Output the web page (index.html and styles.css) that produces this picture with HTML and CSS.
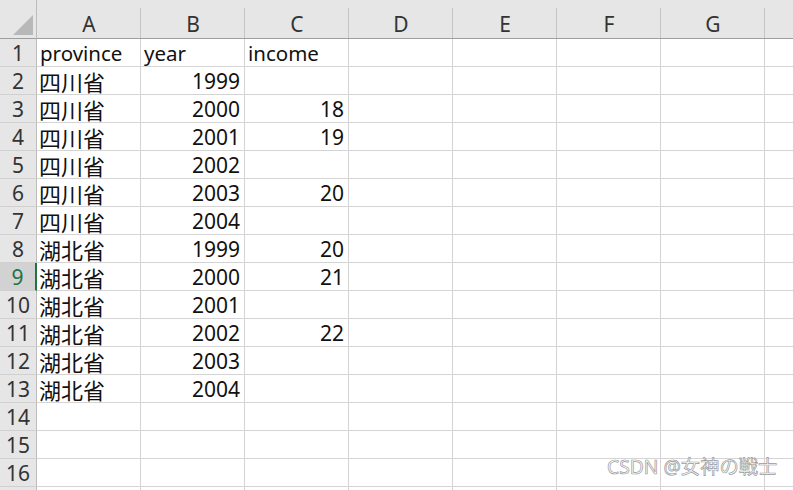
FILE: index.html
```html
<!DOCTYPE html>
<html lang="zh">
<head>
<meta charset="utf-8">
<link rel="stylesheet" href="styles.css">
</head>
<body>
<div class="sheet">
  <div class="row head">
    <div class="rh corner"><span class="tri"></span></div>
    <div class="ch">A</div><div class="ch">B</div><div class="ch">C</div><div class="ch">D</div><div class="ch">E</div><div class="ch">F</div><div class="ch">G</div><div class="ch">&nbsp;</div>
  </div>
  <div class="row"><div class="rh">1</div><div class="c">province</div><div class="c">year</div><div class="c">income</div><div class="c"></div><div class="c"></div><div class="c"></div><div class="c"></div><div class="c"></div></div>
  <div class="row"><div class="rh">2</div><div class="c z">四川省</div><div class="c n">1999</div><div class="c n"></div><div class="c"></div><div class="c"></div><div class="c"></div><div class="c"></div><div class="c"></div></div>
  <div class="row"><div class="rh">3</div><div class="c z">四川省</div><div class="c n">2000</div><div class="c n">18</div><div class="c"></div><div class="c"></div><div class="c"></div><div class="c"></div><div class="c"></div></div>
  <div class="row"><div class="rh">4</div><div class="c z">四川省</div><div class="c n">2001</div><div class="c n">19</div><div class="c"></div><div class="c"></div><div class="c"></div><div class="c"></div><div class="c"></div></div>
  <div class="row"><div class="rh">5</div><div class="c z">四川省</div><div class="c n">2002</div><div class="c n"></div><div class="c"></div><div class="c"></div><div class="c"></div><div class="c"></div><div class="c"></div></div>
  <div class="row"><div class="rh">6</div><div class="c z">四川省</div><div class="c n">2003</div><div class="c n">20</div><div class="c"></div><div class="c"></div><div class="c"></div><div class="c"></div><div class="c"></div></div>
  <div class="row"><div class="rh">7</div><div class="c z">四川省</div><div class="c n">2004</div><div class="c n"></div><div class="c"></div><div class="c"></div><div class="c"></div><div class="c"></div><div class="c"></div></div>
  <div class="row"><div class="rh">8</div><div class="c z">湖北省</div><div class="c n">1999</div><div class="c n">20</div><div class="c"></div><div class="c"></div><div class="c"></div><div class="c"></div><div class="c"></div></div>
  <div class="row"><div class="rh sel">9</div><div class="c z">湖北省</div><div class="c n">2000</div><div class="c n">21</div><div class="c"></div><div class="c"></div><div class="c"></div><div class="c"></div><div class="c"></div></div>
  <div class="row"><div class="rh">10</div><div class="c z">湖北省</div><div class="c n">2001</div><div class="c n"></div><div class="c"></div><div class="c"></div><div class="c"></div><div class="c"></div><div class="c"></div></div>
  <div class="row"><div class="rh">11</div><div class="c z">湖北省</div><div class="c n">2002</div><div class="c n">22</div><div class="c"></div><div class="c"></div><div class="c"></div><div class="c"></div><div class="c"></div></div>
  <div class="row"><div class="rh">12</div><div class="c z">湖北省</div><div class="c n">2003</div><div class="c n"></div><div class="c"></div><div class="c"></div><div class="c"></div><div class="c"></div><div class="c"></div></div>
  <div class="row"><div class="rh">13</div><div class="c z">湖北省</div><div class="c n">2004</div><div class="c n"></div><div class="c"></div><div class="c"></div><div class="c"></div><div class="c"></div><div class="c"></div></div>
  <div class="row"><div class="rh">14</div><div class="c"></div><div class="c"></div><div class="c"></div><div class="c"></div><div class="c"></div><div class="c"></div><div class="c"></div><div class="c"></div></div>
  <div class="row"><div class="rh">15</div><div class="c"></div><div class="c"></div><div class="c"></div><div class="c"></div><div class="c"></div><div class="c"></div><div class="c"></div><div class="c"></div></div>
  <div class="row"><div class="rh">16</div><div class="c"></div><div class="c"></div><div class="c"></div><div class="c"></div><div class="c"></div><div class="c"></div><div class="c"></div><div class="c"></div></div>
  <div class="row"><div class="rh"></div><div class="c"></div><div class="c"></div><div class="c"></div><div class="c"></div><div class="c"></div><div class="c"></div><div class="c"></div><div class="c"></div></div>
</div>
<div class="watermark">CSDN @女神の戦士</div>
</body>
</html>
```
FILE: styles.css
```css
html, body {
  margin: 0;
  padding: 0;
  background: #fff;
  overflow: hidden;
  width: 793px;
  height: 490px;
}
body {
  position: relative;
  font-family: "Noto Sans", "Noto Sans CJK SC", sans-serif;
  font-size: 21px;
  color: #111;
}
.sheet {
  display: flex;
  flex-direction: column;
  width: 793px;
  height: 490px;
  overflow: hidden;
}
.row {
  display: flex;
  height: 28px;
  flex: none;
}
.row.head {
  height: 39px;
}
.rh {
  box-sizing: border-box;
  width: 37px;
  flex: none;
  background: #e6e6e6;
  border-right: 1px solid #bcbcbc;
  border-bottom: 1px solid #d0d0d0;
  display: flex;
  align-items: center;
  justify-content: center;
  color: #333;
  line-height: 1;
  padding-top: 2px;
}
.rh.sel {
  background: #d2d2d2;
  color: #217346;
  border-right: 2px solid #217346;
}
.corner {
  position: relative;
  border-bottom: 1px solid #9e9e9e;
}
.tri {
  position: absolute;
  left: 13px;
  top: 15px;
  width: 20px;
  height: 20px;
  background: #b8b8b8;
  clip-path: polygon(100% 0, 100% 100%, 0 100%);
}
.ch {
  box-sizing: border-box;
  width: 104px;
  flex: none;
  background: #e6e6e6;
  border-bottom: 1px solid #9e9e9e;
  position: relative;
  display: flex;
  align-items: flex-end;
  justify-content: center;
  padding-bottom: 3px;
  color: #333;
  line-height: 1;
}
.ch::after {
  content: "";
  position: absolute;
  right: 0;
  top: 8px;
  bottom: 0;
  width: 1px;
  background: #c4c4c4;
}
.c {
  box-sizing: border-box;
  width: 104px;
  flex: none;
  border-right: 1px solid #d4d4d4;
  border-bottom: 1px solid #d4d4d4;
  display: flex;
  align-items: center;
  padding: 2px 4px 0 3px;
  line-height: 1;
  white-space: nowrap;
  font-size: 20.5px;
}
.c.n {
  justify-content: flex-end;
  font-size: 21px;
}
.c.z {
  font-size: 22px;
  padding-left: 2px;
}
.watermark {
  position: absolute;
  left: 607px;
  top: 457px;
  font-size: 19.3px;
  line-height: 1;
  color: #fff;
  -webkit-text-stroke: 0.7px #9a9a9a;
  font-family: "Noto Sans", "Noto Sans CJK JP", sans-serif;
}
```
